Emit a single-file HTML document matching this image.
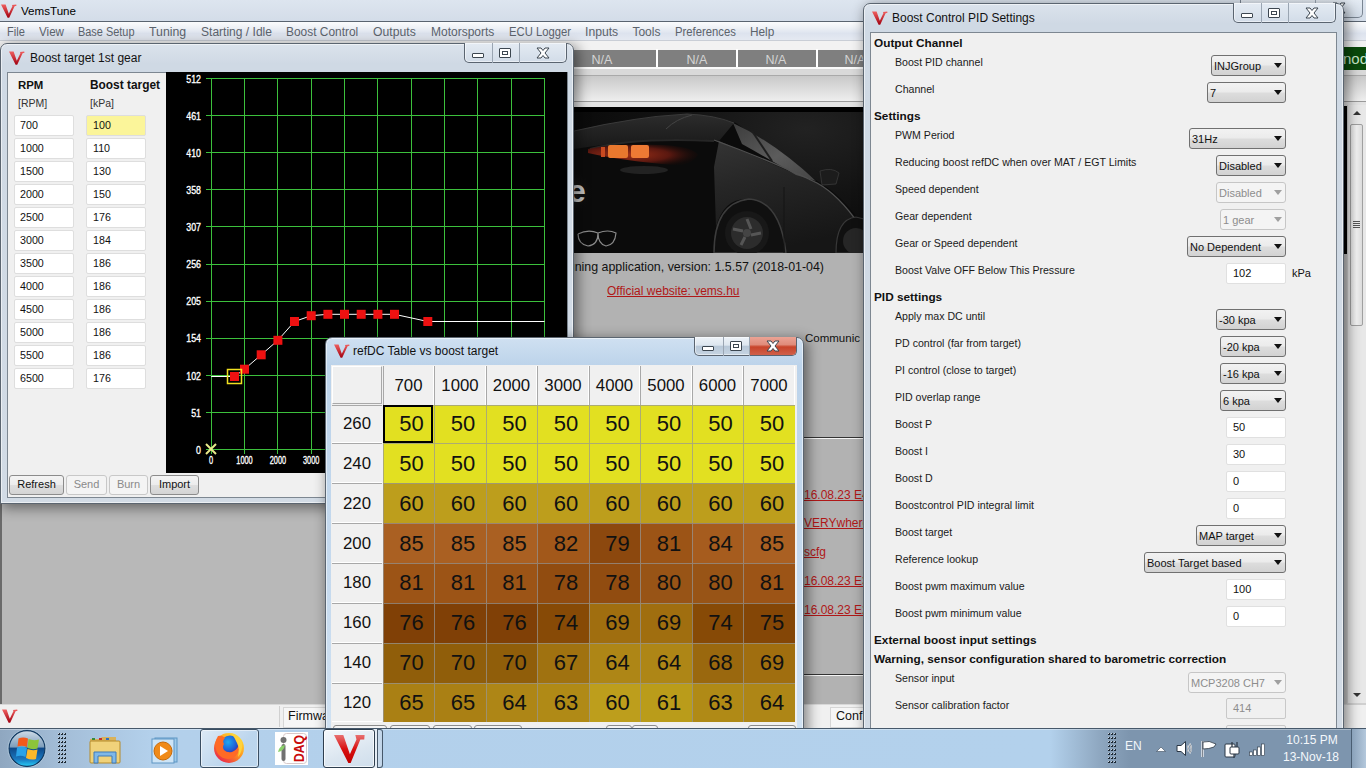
<!DOCTYPE html><html><head><meta charset="utf-8"><style>
*{box-sizing:border-box;margin:0;padding:0}
html,body{width:1366px;height:768px;overflow:hidden;position:relative;background:#ababab;font-family:"Liberation Sans",sans-serif;color:#000}
.a{position:absolute}
.t{position:absolute;white-space:nowrap;line-height:1}
</style></head><body>

<div class="a" style="left:0;top:0;width:1366px;height:22px;background:linear-gradient(#dde5ef,#d3dce8)"></div>
<div class="a" style="left:0;top:21px;width:1366px;height:1px;background:#5a6470"></div>
<div class="t" style="left:21px;top:5px;font-size:11.6px;color:#000">VemsTune</div>
<svg class="a" style="left:1px;top:4px" width="16" height="14" viewBox="0 0 16 14"><defs><linearGradient id="vg" x1="0" y1="0" x2="0" y2="1"><stop offset="0" stop-color="#f06060"/><stop offset="1" stop-color="#a00010"/></linearGradient></defs><path d="M0 0.5 L4.6 0.5 L7.8 9.8 L11.4 2.2 L11 1 L15.2 0.6 L15.5 1.8 L13.6 2.2 L8.2 13.8 L6.6 13.8 Z" fill="url(#vg)"/></svg>
<div class="a" style="left:1240px;top:0;width:123px;height:18px;border:1px solid #7a8592;border-top:none;border-radius:0 0 5px 5px;background:linear-gradient(#e4ebf3,#d2dce8)"></div>
<div class="a" style="left:1315px;top:0;width:1px;height:17px;background:#9aa5b2"></div>
<svg class="a" style="left:1331px;top:2px" width="16" height="12" viewBox="0 0 16 12"><path d="M2 1 L6 1 L8 3.5 L10 1 L14 1 L10 6 L14 11 L10 11 L8 8.5 L6 11 L2 11 L6 6 Z" fill="#fff" stroke="#3c4650" stroke-width="1"/></svg>
<div class="a" style="left:0;top:22px;width:1366px;height:19px;background:linear-gradient(#fbfcfd 0,#eef1f6 30%,#dde3ee 60%,#e6eaf2 100%)"></div>
<div class="a" style="left:0;top:40px;width:1366px;height:1px;background:#c9ced6"></div>
<div class="t" style="left:7.2px;top:26px;font-size:12px;color:#5c636c;transform:scaleX(0.922);transform-origin:0 0">File</div>
<div class="t" style="left:39.0px;top:26px;font-size:12px;color:#5c636c;transform:scaleX(0.969);transform-origin:0 0">View</div>
<div class="t" style="left:78.0px;top:26px;font-size:12px;color:#5c636c;transform:scaleX(0.910);transform-origin:0 0">Base Setup</div>
<div class="t" style="left:149.4px;top:26px;font-size:12px;color:#5c636c;transform:scaleX(1.025);transform-origin:0 0">Tuning</div>
<div class="t" style="left:201.0px;top:26px;font-size:12px;color:#5c636c;transform:scaleX(1.004);transform-origin:0 0">Starting / Idle</div>
<div class="t" style="left:286.4px;top:26px;font-size:12px;color:#5c636c;transform:scaleX(0.993);transform-origin:0 0">Boost Control</div>
<div class="t" style="left:373.2px;top:26px;font-size:12px;color:#5c636c;transform:scaleX(1.017);transform-origin:0 0">Outputs</div>
<div class="t" style="left:431.0px;top:26px;font-size:12px;color:#5c636c;transform:scaleX(1.000);transform-origin:0 0">Motorsports</div>
<div class="t" style="left:509.0px;top:26px;font-size:12px;color:#5c636c;transform:scaleX(0.938);transform-origin:0 0">ECU Logger</div>
<div class="t" style="left:584.6px;top:26px;font-size:12px;color:#5c636c;transform:scaleX(1.015);transform-origin:0 0">Inputs</div>
<div class="t" style="left:632.4px;top:26px;font-size:12px;color:#5c636c;transform:scaleX(1.000);transform-origin:0 0">Tools</div>
<div class="t" style="left:675.0px;top:26px;font-size:12px;color:#5c636c;transform:scaleX(0.941);transform-origin:0 0">Preferences</div>
<div class="t" style="left:750.0px;top:26px;font-size:12px;color:#5c636c;transform:scaleX(0.984);transform-origin:0 0">Help</div>
<div class="a" style="left:0;top:41px;width:1366px;height:9px;background:#f2f2f2"></div>
<div class="a" style="left:0;top:50px;width:1366px;height:17px;background:#7f7f7f"></div>
<div class="a" style="left:656px;top:49px;width:2px;height:19px;background:#fff"></div>
<div class="a" style="left:736px;top:49px;width:2px;height:19px;background:#fff"></div>
<div class="a" style="left:816px;top:49px;width:2px;height:19px;background:#fff"></div>
<div class="t" style="left:587px;top:54px;width:30px;text-align:center;font-size:12.5px;color:#d4d4d4">N/A</div>
<div class="t" style="left:682px;top:54px;width:30px;text-align:center;font-size:12.5px;color:#d4d4d4">N/A</div>
<div class="t" style="left:761px;top:54px;width:30px;text-align:center;font-size:12.5px;color:#d4d4d4">N/A</div>
<div class="t" style="left:840px;top:54px;width:30px;text-align:center;font-size:12.5px;color:#d4d4d4">N/A</div>
<div class="a" style="left:0;top:67px;width:1366px;height:2px;background:#fafafa"></div>
<div class="a" style="left:0;top:69px;width:1366px;height:7px;background:#d9d9d9"></div>
<div class="a" style="left:0;top:75px;width:1366px;height:1px;background:#a9a9a9"></div>
<div class="a" style="left:0;top:76px;width:1366px;height:26px;background:linear-gradient(#c9c9c9,#f0f0f0)"></div>
<div class="a" style="left:0;top:101px;width:1366px;height:1px;background:#9a9a9a"></div>
<div class="a" style="left:0;top:102px;width:1366px;height:5px;background:#e3e3e3"></div>
<div class="a" style="left:1336px;top:47px;width:30px;height:23px;background:#0b4a0b"></div>
<div class="t" style="left:1343px;top:51px;font-size:15px;color:#c8e6c8">nod</div>
<div class="a" style="left:0;top:107px;width:1366px;height:598px;background:#b2b2b2"></div>
<div class="a" style="left:0;top:490px;width:574px;height:215px;background:#b8b8b8;border-left:2px solid #6a6a6a"></div>
<div class="a" style="left:1342px;top:254px;width:5px;height:451px;background:#c8c8c8"></div>
<div class="a" style="left:1342px;top:106px;width:5px;height:148px;background:#000"></div>
<svg class="a" style="left:574px;top:107px" width="290" height="146" viewBox="0 0 290 146">
<defs>
<radialGradient id="cbg" cx="0.8" cy="0.15" r="0.9"><stop offset="0" stop-color="#222"/><stop offset="0.5" stop-color="#131313"/><stop offset="1" stop-color="#080808"/></radialGradient>
<linearGradient id="glass" x1="0" y1="0" x2="1" y2="1"><stop offset="0" stop-color="#3c3c3c"/><stop offset="0.55" stop-color="#5c5c5c"/><stop offset="1" stop-color="#444"/></linearGradient>
<linearGradient id="side" x1="0" y1="0" x2="0.3" y2="1"><stop offset="0" stop-color="#343434"/><stop offset="0.4" stop-color="#262626"/><stop offset="1" stop-color="#161616"/></linearGradient>
<linearGradient id="trunk" x1="0" y1="0" x2="0" y2="1"><stop offset="0" stop-color="#2c2c2c"/><stop offset="1" stop-color="#181818"/></linearGradient>
<radialGradient id="tl" cx="0.35" cy="0.5" r="0.65"><stop offset="0" stop-color="#a03018"/><stop offset="0.6" stop-color="#5a1810"/><stop offset="1" stop-color="#1a0a08" stop-opacity="0.3"/></radialGradient>
<radialGradient id="eglow" cx="0.1" cy="0.5" r="0.6"><stop offset="0" stop-color="#3a3a3a"/><stop offset="1" stop-color="#0c0c0c" stop-opacity="0"/></radialGradient>
</defs>
<rect width="290" height="146" fill="url(#cbg)"/>
<rect width="290" height="5" fill="#000"/>
<path d="M0 24 Q60 10 113 7 Q140 8 162 16 L246 76 Q270 90 288 118 L290 146 L0 146 Z" fill="#0b0b0b"/>
<path d="M0 24 Q60 10 113 7 Q140 8 160 16 L145 34 Q90 28 0 42 Z" fill="url(#trunk)"/>
<path d="M0 24 Q60 10 113 7 Q140 8 160 16" fill="none" stroke="#3a3a3a" stroke-width="1.2"/>
<path d="M92 22 Q102 12 118 8" fill="none" stroke="#444" stroke-width="1"/>
<path d="M145 34 L243 76 Q268 90 288 120 L290 146 L205 146 Q200 100 175 92 Q150 90 142 120 L140 60 Z" fill="url(#side)"/>
<path d="M159 16 Q200 35 242 74 L222 68 Q195 52 168 37 Z" fill="url(#glass)"/>
<path d="M178 24 L198 54" stroke="#1e1e1e" stroke-width="2"/>
<path d="M140 33 Q200 55 243 76 Q265 88 286 119" fill="none" stroke="#505050" stroke-width="1.3"/>
<path d="M16 42 Q60 30 140 34" fill="none" stroke="#262626" stroke-width="2"/>
<path d="M14 42 Q40 36 90 38 Q120 40 124 48 Q118 58 100 58 Q50 54 14 46 Z" fill="url(#tl)"/>
<rect x="27" y="40" width="4" height="10" fill="#c84a20"/><rect x="34" y="38" width="20" height="13" rx="2" fill="#e8782e"/><rect x="57" y="38" width="18" height="13" rx="2" fill="#ee7a34"/>
<ellipse cx="70" cy="63" rx="24" ry="4" fill="#222"/>
<ellipse cx="8" cy="85" rx="30" ry="22" fill="url(#eglow)"/>
<text x="-6" y="95" font-family="Liberation Sans" font-weight="700" font-size="32" fill="#c4c4c4">e</text>
<path d="M140 146 Q140 96 175 92 Q206 94 212 146 Z" fill="#101010" stroke="#3c3c3c" stroke-width="1.5"/>
<circle cx="173" cy="126" r="22" fill="#181818"/>
<circle cx="173" cy="126" r="16" fill="#2c2c2c"/>
<path d="M173 112 L177 122 M187 126 L177 128 M167 138 L171 130 M159 122 L169 124" stroke="#555" stroke-width="3"/>
<circle cx="173" cy="126" r="4" fill="#444"/>
<path d="M210 80 L210 146" stroke="#141414" stroke-width="1"/>
<path d="M246 64 Q258 60 265 66 L262 77 L248 78 Z" fill="#1c1c1c" stroke="#3a3a3a" stroke-width="0.8"/>
<path d="M262 146 Q262 112 282 110 L290 112 L290 146 Z" fill="#101010" stroke="#383838" stroke-width="1.2"/>
<circle cx="282" cy="134" r="13" fill="#262626"/>
<path d="M4 127 Q14 122 24 126 Q24 138 14 139 Q4 137 4 127 M24 126 Q34 122 42 126 Q41 138 32 139 Q24 137 24 126" fill="#0a0a0a" stroke="#8a8a8a" stroke-width="1.2"/>
</svg>
<div class="a" style="left:574px;top:255px;width:252px;height:20px;overflow:hidden"><div class="t" style="right:2px;top:6px;font-size:12.4px;color:#111">Official VEMS tuning application, version: 1.5.57 (2018-01-04)</div></div>
<div class="t" style="left:607px;top:285px;font-size:12px;color:#b01818;text-decoration:underline">Official website: vems.hu</div>
<div class="t" style="left:805px;top:333px;font-size:11.5px;color:#111">Communic</div>
<div class="a" style="left:573px;top:437px;width:291px;height:1px;background:#333"></div>
<div class="a" style="left:573px;top:438px;width:291px;height:1px;background:#f4f4f4"></div>
<div class="t" style="left:804px;top:489px;font-size:12px;color:#b01818;text-decoration:underline">16.08.23 E4</div>
<div class="t" style="left:804px;top:517px;font-size:12px;color:#b01818;text-decoration:underline">VERYwhere</div>
<div class="t" style="left:804px;top:546px;font-size:12px;color:#b01818;text-decoration:underline">scfg</div>
<div class="t" style="left:804px;top:575px;font-size:12px;color:#b01818;text-decoration:underline">16.08.23 E3</div>
<div class="t" style="left:804px;top:604px;font-size:12px;color:#b01818;text-decoration:underline">16.08.23 E2</div>
<div class="a" style="left:573px;top:674px;width:291px;height:1px;background:#333"></div>
<div class="a" style="left:573px;top:675px;width:291px;height:1px;background:#f4f4f4"></div>
<div class="a" style="left:0;top:704px;width:1366px;height:24px;background:#f0f0f0;border-top:1px solid #d8d8d8"></div>
<div class="a" style="left:50px;top:706px;width:230px;height:21px;border-right:1px solid #d0d0d0"></div>
<div class="a" style="left:283px;top:707px;width:60px;height:21px;border:1px solid #d6d6d6;background:#f6f6f6"></div>
<div class="t" style="left:288px;top:710px;font-size:12.5px;color:#111">Firmware</div>
<div class="a" style="left:830px;top:707px;width:40px;height:21px;border:1px solid #d6d6d6;background:#f6f6f6"></div>
<div class="t" style="left:836px;top:710px;font-size:12.5px;color:#111">Conf</div>
<svg class="a" style="left:2px;top:709px" width="16" height="14" viewBox="0 0 16 14"><defs><linearGradient id="vg" x1="0" y1="0" x2="0" y2="1"><stop offset="0" stop-color="#f06060"/><stop offset="1" stop-color="#a00010"/></linearGradient></defs><path d="M0 0.5 L4.6 0.5 L7.8 9.8 L11.4 2.2 L11 1 L15.2 0.6 L15.5 1.8 L13.6 2.2 L8.2 13.8 L6.6 13.8 Z" fill="url(#vg)"/></svg>
<div class="a" style="left:1347px;top:105px;width:19px;height:600px;background:#e8e8e8;border-left:1px solid #d0d0d0"></div>
<div class="a" style="left:1350px;top:124px;width:13px;height:202px;background:linear-gradient(90deg,#e4e4e4,#f4f4f4 50%,#dcdcdc);border:1px solid #a0a0a0;border-radius:2px"></div>
<svg class="a" style="left:1353px;top:111px" width="8" height="4"><path d="M0 4 L8 4 L4 0 Z" fill="#333"/></svg>
<div class="a" style="left:1353px;top:221px;width:7px;height:7px;background:repeating-linear-gradient(#555 0,#555 1px,transparent 1px,transparent 2px)"></div>
<svg class="a" style="left:1353px;top:693px" width="8" height="4"><path d="M0 0 L8 0 L4 4 Z" fill="#333"/></svg>
<div class="a" style="left:1347px;top:703px;width:19px;height:2px;background:#d0d0d0"></div>
<div class="a" style="left:0px;top:43px;width:574px;height:461px;background:linear-gradient(180deg,#dbe3ec 0,#cfd9e4 20px,#d2dbe5 100%);border:1px solid #5b6570;border-radius:7px 7px 0 0;box-shadow:inset 0 0 0 1px rgba(255,255,255,.55),3px 3px 13px 1px rgba(0,0,0,.45)"></div><div class="a" style="left:7px;top:72px;width:561px;height:426px;background:#f0f0f0;border:1px solid #7d8791"></div><svg class="a" style="left:9px;top:51px" width="16" height="14" viewBox="0 0 16 14"><defs><linearGradient id="vg" x1="0" y1="0" x2="0" y2="1"><stop offset="0" stop-color="#f06060"/><stop offset="1" stop-color="#a00010"/></linearGradient></defs><path d="M0 0.5 L4.6 0.5 L7.8 9.8 L11.4 2.2 L11 1 L15.2 0.6 L15.5 1.8 L13.6 2.2 L8.2 13.8 L6.6 13.8 Z" fill="url(#vg)"/></svg><div class="t" style="left:30px;top:52px;font-size:12px;color:#111">Boost target 1st gear</div><div class="a" style="left:464px;top:43px;width:103px;height:20px;border:1px solid #5a6470;border-top:none;border-radius:0 0 5px 5px;background:linear-gradient(#e4ebf3,#d2dce8);box-shadow:inset 0 0 0 1px rgba(255,255,255,.5)"></div><div class="a" style="left:492px;top:43px;width:1px;height:20px;background:#9aa5b2"></div><div class="a" style="left:519px;top:43px;width:1px;height:20px;background:#9aa5b2"></div><div class="a" style="left:472px;top:53px;width:12px;height:5px;background:#fff;border:1px solid #3c4650;border-radius:1px"></div><div class="a" style="left:499px;top:48px;width:12px;height:10px;background:#fff;border:1px solid #3c4650;border-radius:1px"></div><div class="a" style="left:502px;top:51px;width:6px;height:4px;border:1px solid #3c4650"></div><svg class="a" style="left:535px;top:47px" width="16" height="12" viewBox="0 0 16 12"><path d="M2 1 L6 1 L8 3.5 L10 1 L14 1 L10 6 L14 11 L10 11 L8 8.5 L6 11 L2 11 L6 6 Z" fill="#fff" stroke="#3c4650" stroke-width="1"/></svg>
<div class="t" style="left:18px;top:80px;font-size:11.4px;font-weight:700;color:#111">RPM</div>
<div class="t" style="left:90px;top:80px;font-size:11.9px;font-weight:700;color:#111">Boost target</div>
<div class="t" style="left:18px;top:98px;font-size:10.5px;color:#333">[RPM]</div>
<div class="t" style="left:90px;top:98px;font-size:10.5px;color:#333">[kPa]</div>
<div class="a" style="left:14px;top:115px;width:60px;height:21px;background:#fff;border:1px solid #dedede;border-radius:2px"></div>
<div class="t" style="left:20px;top:120px;font-size:10.7px;color:#111">700</div>
<div class="a" style="left:86px;top:115px;width:60px;height:21px;background:#fbf59a;border:1px solid #dedede;border-radius:2px"></div>
<div class="t" style="left:93px;top:120px;font-size:10.7px;color:#111">100</div>
<div class="a" style="left:14px;top:138px;width:60px;height:21px;background:#fff;border:1px solid #dedede;border-radius:2px"></div>
<div class="t" style="left:20px;top:143px;font-size:10.7px;color:#111">1000</div>
<div class="a" style="left:86px;top:138px;width:60px;height:21px;background:#fff;border:1px solid #dedede;border-radius:2px"></div>
<div class="t" style="left:93px;top:143px;font-size:10.7px;color:#111">110</div>
<div class="a" style="left:14px;top:161px;width:60px;height:21px;background:#fff;border:1px solid #dedede;border-radius:2px"></div>
<div class="t" style="left:20px;top:166px;font-size:10.7px;color:#111">1500</div>
<div class="a" style="left:86px;top:161px;width:60px;height:21px;background:#fff;border:1px solid #dedede;border-radius:2px"></div>
<div class="t" style="left:93px;top:166px;font-size:10.7px;color:#111">130</div>
<div class="a" style="left:14px;top:184px;width:60px;height:21px;background:#fff;border:1px solid #dedede;border-radius:2px"></div>
<div class="t" style="left:20px;top:189px;font-size:10.7px;color:#111">2000</div>
<div class="a" style="left:86px;top:184px;width:60px;height:21px;background:#fff;border:1px solid #dedede;border-radius:2px"></div>
<div class="t" style="left:93px;top:189px;font-size:10.7px;color:#111">150</div>
<div class="a" style="left:14px;top:207px;width:60px;height:21px;background:#fff;border:1px solid #dedede;border-radius:2px"></div>
<div class="t" style="left:20px;top:212px;font-size:10.7px;color:#111">2500</div>
<div class="a" style="left:86px;top:207px;width:60px;height:21px;background:#fff;border:1px solid #dedede;border-radius:2px"></div>
<div class="t" style="left:93px;top:212px;font-size:10.7px;color:#111">176</div>
<div class="a" style="left:14px;top:230px;width:60px;height:21px;background:#fff;border:1px solid #dedede;border-radius:2px"></div>
<div class="t" style="left:20px;top:235px;font-size:10.7px;color:#111">3000</div>
<div class="a" style="left:86px;top:230px;width:60px;height:21px;background:#fff;border:1px solid #dedede;border-radius:2px"></div>
<div class="t" style="left:93px;top:235px;font-size:10.7px;color:#111">184</div>
<div class="a" style="left:14px;top:253px;width:60px;height:21px;background:#fff;border:1px solid #dedede;border-radius:2px"></div>
<div class="t" style="left:20px;top:258px;font-size:10.7px;color:#111">3500</div>
<div class="a" style="left:86px;top:253px;width:60px;height:21px;background:#fff;border:1px solid #dedede;border-radius:2px"></div>
<div class="t" style="left:93px;top:258px;font-size:10.7px;color:#111">186</div>
<div class="a" style="left:14px;top:276px;width:60px;height:21px;background:#fff;border:1px solid #dedede;border-radius:2px"></div>
<div class="t" style="left:20px;top:281px;font-size:10.7px;color:#111">4000</div>
<div class="a" style="left:86px;top:276px;width:60px;height:21px;background:#fff;border:1px solid #dedede;border-radius:2px"></div>
<div class="t" style="left:93px;top:281px;font-size:10.7px;color:#111">186</div>
<div class="a" style="left:14px;top:299px;width:60px;height:21px;background:#fff;border:1px solid #dedede;border-radius:2px"></div>
<div class="t" style="left:20px;top:304px;font-size:10.7px;color:#111">4500</div>
<div class="a" style="left:86px;top:299px;width:60px;height:21px;background:#fff;border:1px solid #dedede;border-radius:2px"></div>
<div class="t" style="left:93px;top:304px;font-size:10.7px;color:#111">186</div>
<div class="a" style="left:14px;top:322px;width:60px;height:21px;background:#fff;border:1px solid #dedede;border-radius:2px"></div>
<div class="t" style="left:20px;top:327px;font-size:10.7px;color:#111">5000</div>
<div class="a" style="left:86px;top:322px;width:60px;height:21px;background:#fff;border:1px solid #dedede;border-radius:2px"></div>
<div class="t" style="left:93px;top:327px;font-size:10.7px;color:#111">186</div>
<div class="a" style="left:14px;top:345px;width:60px;height:21px;background:#fff;border:1px solid #dedede;border-radius:2px"></div>
<div class="t" style="left:20px;top:350px;font-size:10.7px;color:#111">5500</div>
<div class="a" style="left:86px;top:345px;width:60px;height:21px;background:#fff;border:1px solid #dedede;border-radius:2px"></div>
<div class="t" style="left:93px;top:350px;font-size:10.7px;color:#111">186</div>
<div class="a" style="left:14px;top:368px;width:60px;height:21px;background:#fff;border:1px solid #dedede;border-radius:2px"></div>
<div class="t" style="left:20px;top:373px;font-size:10.7px;color:#111">6500</div>
<div class="a" style="left:86px;top:368px;width:60px;height:21px;background:#fff;border:1px solid #dedede;border-radius:2px"></div>
<div class="t" style="left:93px;top:373px;font-size:10.7px;color:#111">176</div>
<div class="a" style="left:9px;top:475px;width:55px;height:20px;border:1px solid #8c8c8c;border-radius:3px;background:linear-gradient(#f4f4f4 0,#ececec 50%,#dedede 51%,#d4d4d4 100%)"></div>
<div class="t" style="left:9px;top:479px;width:55px;text-align:center;font-size:11px;color:#111">Refresh</div>
<div class="a" style="left:66px;top:475px;width:41px;height:20px;border:1px solid #c8c8c8;border-radius:3px;background:#f4f4f4"></div>
<div class="t" style="left:66px;top:479px;width:41px;text-align:center;font-size:11px;color:#8a8a8a">Send</div>
<div class="a" style="left:109px;top:475px;width:39px;height:20px;border:1px solid #c8c8c8;border-radius:3px;background:#f4f4f4"></div>
<div class="t" style="left:109px;top:479px;width:39px;text-align:center;font-size:11px;color:#8a8a8a">Burn</div>
<div class="a" style="left:150px;top:475px;width:49px;height:20px;border:1px solid #8c8c8c;border-radius:3px;background:linear-gradient(#f4f4f4 0,#ececec 50%,#dedede 51%,#d4d4d4 100%)"></div>
<div class="t" style="left:150px;top:479px;width:49px;text-align:center;font-size:11px;color:#111">Import</div>
<div class="a" style="left:166px;top:72px;width:401px;height:401px;background:#000"></div>
<svg class="a" style="left:166px;top:72px" width="401" height="401" viewBox="166 72 401 401"><line x1="211.5" y1="78" x2="211.5" y2="454" stroke="#3cc03c" stroke-width="1"/><line x1="244.5" y1="78" x2="244.5" y2="454" stroke="#3cc03c" stroke-width="1"/><line x1="277.5" y1="78" x2="277.5" y2="454" stroke="#3cc03c" stroke-width="1"/><line x1="311.5" y1="78" x2="311.5" y2="454" stroke="#3cc03c" stroke-width="1"/><line x1="344.5" y1="78" x2="344.5" y2="454" stroke="#3cc03c" stroke-width="1"/><line x1="377.5" y1="78" x2="377.5" y2="454" stroke="#3cc03c" stroke-width="1"/><line x1="411.5" y1="78" x2="411.5" y2="454" stroke="#3cc03c" stroke-width="1"/><line x1="444.5" y1="78" x2="444.5" y2="454" stroke="#3cc03c" stroke-width="1"/><line x1="477.5" y1="78" x2="477.5" y2="454" stroke="#3cc03c" stroke-width="1"/><line x1="511.5" y1="78" x2="511.5" y2="454" stroke="#3cc03c" stroke-width="1"/><line x1="544.5" y1="78" x2="544.5" y2="454" stroke="#3cc03c" stroke-width="1"/><line x1="206" y1="78.5" x2="545" y2="78.5" stroke="#3cc03c" stroke-width="1"/><text x="186.3" y="82.7" textLength="14.7" lengthAdjust="spacingAndGlyphs" font-family="Liberation Sans" font-size="11.5" font-weight="400" fill="#fff" stroke="#fff" stroke-width="0.35">512</text><line x1="206" y1="115.5" x2="545" y2="115.5" stroke="#3cc03c" stroke-width="1"/><text x="186.3" y="119.8" textLength="14.7" lengthAdjust="spacingAndGlyphs" font-family="Liberation Sans" font-size="11.5" font-weight="400" fill="#fff" stroke="#fff" stroke-width="0.35">461</text><line x1="206" y1="152.5" x2="545" y2="152.5" stroke="#3cc03c" stroke-width="1"/><text x="186.3" y="156.9" textLength="14.7" lengthAdjust="spacingAndGlyphs" font-family="Liberation Sans" font-size="11.5" font-weight="400" fill="#fff" stroke="#fff" stroke-width="0.35">410</text><line x1="206" y1="189.5" x2="545" y2="189.5" stroke="#3cc03c" stroke-width="1"/><text x="186.3" y="194.0" textLength="14.7" lengthAdjust="spacingAndGlyphs" font-family="Liberation Sans" font-size="11.5" font-weight="400" fill="#fff" stroke="#fff" stroke-width="0.35">358</text><line x1="206" y1="226.5" x2="545" y2="226.5" stroke="#3cc03c" stroke-width="1"/><text x="186.3" y="231.1" textLength="14.7" lengthAdjust="spacingAndGlyphs" font-family="Liberation Sans" font-size="11.5" font-weight="400" fill="#fff" stroke="#fff" stroke-width="0.35">307</text><line x1="206" y1="264.5" x2="545" y2="264.5" stroke="#3cc03c" stroke-width="1"/><text x="186.3" y="268.2" textLength="14.7" lengthAdjust="spacingAndGlyphs" font-family="Liberation Sans" font-size="11.5" font-weight="400" fill="#fff" stroke="#fff" stroke-width="0.35">256</text><line x1="206" y1="301.5" x2="545" y2="301.5" stroke="#3cc03c" stroke-width="1"/><text x="186.3" y="305.3" textLength="14.7" lengthAdjust="spacingAndGlyphs" font-family="Liberation Sans" font-size="11.5" font-weight="400" fill="#fff" stroke="#fff" stroke-width="0.35">205</text><line x1="206" y1="338.5" x2="545" y2="338.5" stroke="#3cc03c" stroke-width="1"/><text x="186.3" y="342.4" textLength="14.7" lengthAdjust="spacingAndGlyphs" font-family="Liberation Sans" font-size="11.5" font-weight="400" fill="#fff" stroke="#fff" stroke-width="0.35">154</text><line x1="206" y1="375.5" x2="545" y2="375.5" stroke="#3cc03c" stroke-width="1"/><text x="186.3" y="379.5" textLength="14.7" lengthAdjust="spacingAndGlyphs" font-family="Liberation Sans" font-size="11.5" font-weight="400" fill="#fff" stroke="#fff" stroke-width="0.35">102</text><line x1="206" y1="412.5" x2="545" y2="412.5" stroke="#3cc03c" stroke-width="1"/><text x="191.2" y="416.6" textLength="9.8" lengthAdjust="spacingAndGlyphs" font-family="Liberation Sans" font-size="11.5" font-weight="400" fill="#fff" stroke="#fff" stroke-width="0.35">51</text><line x1="206" y1="449.5" x2="545" y2="449.5" stroke="#3cc03c" stroke-width="1"/><text x="196.1" y="453.7" textLength="4.9" lengthAdjust="spacingAndGlyphs" font-family="Liberation Sans" font-size="11.5" font-weight="400" fill="#fff" stroke="#fff" stroke-width="0.35">0</text><text x="209.1" y="464" textLength="4.1" lengthAdjust="spacingAndGlyphs" font-family="Liberation Sans" font-size="11" font-weight="400" fill="#fff" stroke="#fff" stroke-width="0.35">0</text><text x="236.3" y="464" textLength="16.4" lengthAdjust="spacingAndGlyphs" font-family="Liberation Sans" font-size="11" font-weight="400" fill="#fff" stroke="#fff" stroke-width="0.35">1000</text><text x="269.7" y="464" textLength="16.4" lengthAdjust="spacingAndGlyphs" font-family="Liberation Sans" font-size="11" font-weight="400" fill="#fff" stroke="#fff" stroke-width="0.35">2000</text><text x="303.0" y="464" textLength="16.4" lengthAdjust="spacingAndGlyphs" font-family="Liberation Sans" font-size="11" font-weight="400" fill="#fff" stroke="#fff" stroke-width="0.35">3000</text><polyline points="211.2,376.5 234.5,376.5 244.5,369.2 261.2,354.8 277.9,340.3 294.5,321.5 311.2,315.7 327.9,314.3 344.5,314.3 361.2,314.3 377.9,314.3 394.5,314.3 427.8,321.5 544.5,321.5" fill="none" stroke="#fff" stroke-width="1"/><rect x="230.0" y="372.0" width="9" height="9" fill="#ee1111"/><rect x="240.0" y="364.7" width="9" height="9" fill="#ee1111"/><rect x="256.7" y="350.3" width="9" height="9" fill="#ee1111"/><rect x="273.4" y="335.8" width="9" height="9" fill="#ee1111"/><rect x="290.0" y="317.0" width="9" height="9" fill="#ee1111"/><rect x="306.7" y="311.2" width="9" height="9" fill="#ee1111"/><rect x="323.4" y="309.8" width="9" height="9" fill="#ee1111"/><rect x="340.0" y="309.8" width="9" height="9" fill="#ee1111"/><rect x="356.7" y="309.8" width="9" height="9" fill="#ee1111"/><rect x="373.4" y="309.8" width="9" height="9" fill="#ee1111"/><rect x="390.0" y="309.8" width="9" height="9" fill="#ee1111"/><rect x="423.3" y="317.0" width="9" height="9" fill="#ee1111"/><rect x="227.5" y="369.5" width="14" height="14" fill="none" stroke="#f0e020" stroke-width="1.5"/><path d="M206 444 L216 454 M216 444 L206 454" stroke="#e8e88a" stroke-width="2"/></svg>
<div class="a" style="left:325px;top:337px;width:479px;height:420px;background:linear-gradient(180deg,#cfe0f1 0,#bcd3ea 28px,#c6daee 60%,#d2e3f3 100%);border:1px solid #5b6570;border-radius:7px 7px 0 0;box-shadow:inset 0 0 0 1px rgba(255,255,255,.55),3px 3px 13px 1px rgba(0,0,0,.45)"></div><div class="a" style="left:331px;top:365px;width:466px;height:393px;background:#f0f0f0;border:1px solid #7d8791"></div><svg class="a" style="left:334px;top:344px" width="16" height="14" viewBox="0 0 16 14"><defs><linearGradient id="vg" x1="0" y1="0" x2="0" y2="1"><stop offset="0" stop-color="#f06060"/><stop offset="1" stop-color="#a00010"/></linearGradient></defs><path d="M0 0.5 L4.6 0.5 L7.8 9.8 L11.4 2.2 L11 1 L15.2 0.6 L15.5 1.8 L13.6 2.2 L8.2 13.8 L6.6 13.8 Z" fill="url(#vg)"/></svg><div class="t" style="left:353px;top:345px;font-size:12px;color:#111">refDC Table vs boost target</div><div class="a" style="left:694px;top:337px;width:103px;height:19px;border:1px solid #5a6470;border-top:none;border-radius:0 0 5px 5px;background:linear-gradient(#eef3f8 0,#dde6ef 45%,#b8c8d8 52%,#c6d4e2 100%);box-shadow:inset 0 0 0 1px rgba(255,255,255,.5)"></div><div class="a" style="left:723px;top:337px;width:1px;height:19px;background:#9aa5b2"></div><div class="a" style="left:749px;top:337px;width:1px;height:19px;background:#9aa5b2"></div><div class="a" style="left:750px;top:337px;width:46px;height:18px;border-radius:0 0 4px 0;background:linear-gradient(#eba395 0,#e08c7a 42%,#c8442a 55%,#d0604a 100%)"></div><div class="a" style="left:702px;top:346px;width:12px;height:5px;background:#fff;border:1px solid #3c4650;border-radius:1px"></div><div class="a" style="left:730px;top:341px;width:12px;height:10px;background:#fff;border:1px solid #3c4650;border-radius:1px"></div><div class="a" style="left:733px;top:344px;width:6px;height:4px;border:1px solid #3c4650"></div><svg class="a" style="left:765px;top:340px" width="16" height="12" viewBox="0 0 16 12"><path d="M2 1 L6 1 L8 3.5 L10 1 L14 1 L10 6 L14 11 L10 11 L8 8.5 L6 11 L2 11 L6 6 Z" fill="#fff" stroke="#3c4650" stroke-width="1"/></svg>
<div class="a" style="left:331px;top:365px;width:466px;height:363px;background:#f0f0f0"></div>
<div class="a" style="left:332px;top:366px;width:50px;height:38px;background:#f0f0f0;border:1px solid #fff;border-right-color:#a8a8a8;border-bottom-color:#a8a8a8"></div>
<div class="a" style="left:383px;top:366px;width:51px;height:39px;background:#f0f0f0;border-left:1px solid #a8a8a8;border-right:1px solid #fff"></div>
<div class="t" style="left:383px;top:378px;width:51px;text-align:center;font-size:16.8px;color:#111">700</div>
<div class="a" style="left:434px;top:366px;width:52px;height:39px;background:#f0f0f0;border-left:1px solid #a8a8a8;border-right:1px solid #fff"></div>
<div class="t" style="left:434px;top:378px;width:52px;text-align:center;font-size:16.8px;color:#111">1000</div>
<div class="a" style="left:486px;top:366px;width:51px;height:39px;background:#f0f0f0;border-left:1px solid #a8a8a8;border-right:1px solid #fff"></div>
<div class="t" style="left:486px;top:378px;width:51px;text-align:center;font-size:16.8px;color:#111">2000</div>
<div class="a" style="left:537px;top:366px;width:52px;height:39px;background:#f0f0f0;border-left:1px solid #a8a8a8;border-right:1px solid #fff"></div>
<div class="t" style="left:537px;top:378px;width:52px;text-align:center;font-size:16.8px;color:#111">3000</div>
<div class="a" style="left:589px;top:366px;width:51px;height:39px;background:#f0f0f0;border-left:1px solid #a8a8a8;border-right:1px solid #fff"></div>
<div class="t" style="left:589px;top:378px;width:51px;text-align:center;font-size:16.8px;color:#111">4000</div>
<div class="a" style="left:640px;top:366px;width:52px;height:39px;background:#f0f0f0;border-left:1px solid #a8a8a8;border-right:1px solid #fff"></div>
<div class="t" style="left:640px;top:378px;width:52px;text-align:center;font-size:16.8px;color:#111">5000</div>
<div class="a" style="left:692px;top:366px;width:51px;height:39px;background:#f0f0f0;border-left:1px solid #a8a8a8;border-right:1px solid #fff"></div>
<div class="t" style="left:692px;top:378px;width:51px;text-align:center;font-size:16.8px;color:#111">6000</div>
<div class="a" style="left:743px;top:366px;width:52px;height:39px;background:#f0f0f0;border-left:1px solid #a8a8a8;border-right:1px solid #fff"></div>
<div class="t" style="left:743px;top:378px;width:52px;text-align:center;font-size:16.8px;color:#111">7000</div>
<div class="a" style="left:332px;top:405px;width:50px;height:38px;background:#f0f0f0;border-top:1px solid #a8a8a8;border-bottom:1px solid #fff"></div>
<div class="t" style="left:332px;top:416px;width:50px;text-align:center;font-size:16.8px;color:#111">260</div>
<div class="a" style="left:383px;top:405px;width:51px;height:38px;background:rgb(226,224,33);border-left:1px solid rgba(150,150,150,.7);border-top:1px solid rgba(150,150,150,.7)"></div>
<div class="t" style="left:386px;top:413px;width:51px;text-align:center;font-size:22px;color:#111">50</div>
<div class="a" style="left:434px;top:405px;width:52px;height:38px;background:rgb(226,224,33);border-left:1px solid rgba(150,150,150,.7);border-top:1px solid rgba(150,150,150,.7)"></div>
<div class="t" style="left:437px;top:413px;width:52px;text-align:center;font-size:22px;color:#111">50</div>
<div class="a" style="left:486px;top:405px;width:51px;height:38px;background:rgb(226,224,33);border-left:1px solid rgba(150,150,150,.7);border-top:1px solid rgba(150,150,150,.7)"></div>
<div class="t" style="left:489px;top:413px;width:51px;text-align:center;font-size:22px;color:#111">50</div>
<div class="a" style="left:537px;top:405px;width:52px;height:38px;background:rgb(226,224,33);border-left:1px solid rgba(150,150,150,.7);border-top:1px solid rgba(150,150,150,.7)"></div>
<div class="t" style="left:540px;top:413px;width:52px;text-align:center;font-size:22px;color:#111">50</div>
<div class="a" style="left:589px;top:405px;width:51px;height:38px;background:rgb(226,224,33);border-left:1px solid rgba(150,150,150,.7);border-top:1px solid rgba(150,150,150,.7)"></div>
<div class="t" style="left:592px;top:413px;width:51px;text-align:center;font-size:22px;color:#111">50</div>
<div class="a" style="left:640px;top:405px;width:52px;height:38px;background:rgb(226,224,33);border-left:1px solid rgba(150,150,150,.7);border-top:1px solid rgba(150,150,150,.7)"></div>
<div class="t" style="left:643px;top:413px;width:52px;text-align:center;font-size:22px;color:#111">50</div>
<div class="a" style="left:692px;top:405px;width:51px;height:38px;background:rgb(226,224,33);border-left:1px solid rgba(150,150,150,.7);border-top:1px solid rgba(150,150,150,.7)"></div>
<div class="t" style="left:695px;top:413px;width:51px;text-align:center;font-size:22px;color:#111">50</div>
<div class="a" style="left:743px;top:405px;width:52px;height:38px;background:rgb(226,224,33);border-left:1px solid rgba(150,150,150,.7);border-top:1px solid rgba(150,150,150,.7)"></div>
<div class="t" style="left:746px;top:413px;width:52px;text-align:center;font-size:22px;color:#111">50</div>
<div class="a" style="left:332px;top:443px;width:50px;height:40px;background:#f0f0f0;border-top:1px solid #a8a8a8;border-bottom:1px solid #fff"></div>
<div class="t" style="left:332px;top:456px;width:50px;text-align:center;font-size:16.8px;color:#111">240</div>
<div class="a" style="left:383px;top:443px;width:51px;height:40px;background:rgb(226,224,33);border-left:1px solid rgba(150,150,150,.7);border-top:1px solid rgba(150,150,150,.7)"></div>
<div class="t" style="left:386px;top:453px;width:51px;text-align:center;font-size:22px;color:#111">50</div>
<div class="a" style="left:434px;top:443px;width:52px;height:40px;background:rgb(226,224,33);border-left:1px solid rgba(150,150,150,.7);border-top:1px solid rgba(150,150,150,.7)"></div>
<div class="t" style="left:437px;top:453px;width:52px;text-align:center;font-size:22px;color:#111">50</div>
<div class="a" style="left:486px;top:443px;width:51px;height:40px;background:rgb(226,224,33);border-left:1px solid rgba(150,150,150,.7);border-top:1px solid rgba(150,150,150,.7)"></div>
<div class="t" style="left:489px;top:453px;width:51px;text-align:center;font-size:22px;color:#111">50</div>
<div class="a" style="left:537px;top:443px;width:52px;height:40px;background:rgb(226,224,33);border-left:1px solid rgba(150,150,150,.7);border-top:1px solid rgba(150,150,150,.7)"></div>
<div class="t" style="left:540px;top:453px;width:52px;text-align:center;font-size:22px;color:#111">50</div>
<div class="a" style="left:589px;top:443px;width:51px;height:40px;background:rgb(226,224,33);border-left:1px solid rgba(150,150,150,.7);border-top:1px solid rgba(150,150,150,.7)"></div>
<div class="t" style="left:592px;top:453px;width:51px;text-align:center;font-size:22px;color:#111">50</div>
<div class="a" style="left:640px;top:443px;width:52px;height:40px;background:rgb(226,224,33);border-left:1px solid rgba(150,150,150,.7);border-top:1px solid rgba(150,150,150,.7)"></div>
<div class="t" style="left:643px;top:453px;width:52px;text-align:center;font-size:22px;color:#111">50</div>
<div class="a" style="left:692px;top:443px;width:51px;height:40px;background:rgb(226,224,33);border-left:1px solid rgba(150,150,150,.7);border-top:1px solid rgba(150,150,150,.7)"></div>
<div class="t" style="left:695px;top:453px;width:51px;text-align:center;font-size:22px;color:#111">50</div>
<div class="a" style="left:743px;top:443px;width:52px;height:40px;background:rgb(226,224,33);border-left:1px solid rgba(150,150,150,.7);border-top:1px solid rgba(150,150,150,.7)"></div>
<div class="t" style="left:746px;top:453px;width:52px;text-align:center;font-size:22px;color:#111">50</div>
<div class="a" style="left:332px;top:483px;width:50px;height:40px;background:#f0f0f0;border-top:1px solid #a8a8a8;border-bottom:1px solid #fff"></div>
<div class="t" style="left:332px;top:496px;width:50px;text-align:center;font-size:16.8px;color:#111">220</div>
<div class="a" style="left:383px;top:483px;width:51px;height:40px;background:rgb(189,158,28);border-left:1px solid rgba(150,150,150,.7);border-top:1px solid rgba(150,150,150,.7)"></div>
<div class="t" style="left:386px;top:493px;width:51px;text-align:center;font-size:22px;color:#111">60</div>
<div class="a" style="left:434px;top:483px;width:52px;height:40px;background:rgb(189,158,28);border-left:1px solid rgba(150,150,150,.7);border-top:1px solid rgba(150,150,150,.7)"></div>
<div class="t" style="left:437px;top:493px;width:52px;text-align:center;font-size:22px;color:#111">60</div>
<div class="a" style="left:486px;top:483px;width:51px;height:40px;background:rgb(189,158,28);border-left:1px solid rgba(150,150,150,.7);border-top:1px solid rgba(150,150,150,.7)"></div>
<div class="t" style="left:489px;top:493px;width:51px;text-align:center;font-size:22px;color:#111">60</div>
<div class="a" style="left:537px;top:483px;width:52px;height:40px;background:rgb(189,158,28);border-left:1px solid rgba(150,150,150,.7);border-top:1px solid rgba(150,150,150,.7)"></div>
<div class="t" style="left:540px;top:493px;width:52px;text-align:center;font-size:22px;color:#111">60</div>
<div class="a" style="left:589px;top:483px;width:51px;height:40px;background:rgb(189,158,28);border-left:1px solid rgba(150,150,150,.7);border-top:1px solid rgba(150,150,150,.7)"></div>
<div class="t" style="left:592px;top:493px;width:51px;text-align:center;font-size:22px;color:#111">60</div>
<div class="a" style="left:640px;top:483px;width:52px;height:40px;background:rgb(189,158,28);border-left:1px solid rgba(150,150,150,.7);border-top:1px solid rgba(150,150,150,.7)"></div>
<div class="t" style="left:643px;top:493px;width:52px;text-align:center;font-size:22px;color:#111">60</div>
<div class="a" style="left:692px;top:483px;width:51px;height:40px;background:rgb(189,158,28);border-left:1px solid rgba(150,150,150,.7);border-top:1px solid rgba(150,150,150,.7)"></div>
<div class="t" style="left:695px;top:493px;width:51px;text-align:center;font-size:22px;color:#111">60</div>
<div class="a" style="left:743px;top:483px;width:52px;height:40px;background:rgb(189,158,28);border-left:1px solid rgba(150,150,150,.7);border-top:1px solid rgba(150,150,150,.7)"></div>
<div class="t" style="left:746px;top:493px;width:52px;text-align:center;font-size:22px;color:#111">60</div>
<div class="a" style="left:332px;top:523px;width:50px;height:40px;background:#f0f0f0;border-top:1px solid #a8a8a8;border-bottom:1px solid #fff"></div>
<div class="t" style="left:332px;top:536px;width:50px;text-align:center;font-size:16.8px;color:#111">200</div>
<div class="a" style="left:383px;top:523px;width:51px;height:40px;background:rgb(170,96,34);border-left:1px solid rgba(150,150,150,.7);border-top:1px solid rgba(150,150,150,.7)"></div>
<div class="t" style="left:386px;top:533px;width:51px;text-align:center;font-size:22px;color:#111">85</div>
<div class="a" style="left:434px;top:523px;width:52px;height:40px;background:rgb(170,96,34);border-left:1px solid rgba(150,150,150,.7);border-top:1px solid rgba(150,150,150,.7)"></div>
<div class="t" style="left:437px;top:533px;width:52px;text-align:center;font-size:22px;color:#111">85</div>
<div class="a" style="left:486px;top:523px;width:51px;height:40px;background:rgb(170,96,34);border-left:1px solid rgba(150,150,150,.7);border-top:1px solid rgba(150,150,150,.7)"></div>
<div class="t" style="left:489px;top:533px;width:51px;text-align:center;font-size:22px;color:#111">85</div>
<div class="a" style="left:537px;top:523px;width:52px;height:40px;background:rgb(162,88,26);border-left:1px solid rgba(150,150,150,.7);border-top:1px solid rgba(150,150,150,.7)"></div>
<div class="t" style="left:540px;top:533px;width:52px;text-align:center;font-size:22px;color:#111">82</div>
<div class="a" style="left:589px;top:523px;width:51px;height:40px;background:rgb(140,72,14);border-left:1px solid rgba(150,150,150,.7);border-top:1px solid rgba(150,150,150,.7)"></div>
<div class="t" style="left:592px;top:533px;width:51px;text-align:center;font-size:22px;color:#111">79</div>
<div class="a" style="left:640px;top:523px;width:52px;height:40px;background:rgb(156,84,22);border-left:1px solid rgba(150,150,150,.7);border-top:1px solid rgba(150,150,150,.7)"></div>
<div class="t" style="left:643px;top:533px;width:52px;text-align:center;font-size:22px;color:#111">81</div>
<div class="a" style="left:692px;top:523px;width:51px;height:40px;background:rgb(166,92,30);border-left:1px solid rgba(150,150,150,.7);border-top:1px solid rgba(150,150,150,.7)"></div>
<div class="t" style="left:695px;top:533px;width:51px;text-align:center;font-size:22px;color:#111">84</div>
<div class="a" style="left:743px;top:523px;width:52px;height:40px;background:rgb(170,96,34);border-left:1px solid rgba(150,150,150,.7);border-top:1px solid rgba(150,150,150,.7)"></div>
<div class="t" style="left:746px;top:533px;width:52px;text-align:center;font-size:22px;color:#111">85</div>
<div class="a" style="left:332px;top:563px;width:50px;height:40px;background:#f0f0f0;border-top:1px solid #a8a8a8;border-bottom:1px solid #fff"></div>
<div class="t" style="left:332px;top:575px;width:50px;text-align:center;font-size:16.8px;color:#111">180</div>
<div class="a" style="left:383px;top:563px;width:51px;height:40px;background:rgb(156,84,22);border-left:1px solid rgba(150,150,150,.7);border-top:1px solid rgba(150,150,150,.7)"></div>
<div class="t" style="left:386px;top:572px;width:51px;text-align:center;font-size:22px;color:#111">81</div>
<div class="a" style="left:434px;top:563px;width:52px;height:40px;background:rgb(156,84,22);border-left:1px solid rgba(150,150,150,.7);border-top:1px solid rgba(150,150,150,.7)"></div>
<div class="t" style="left:437px;top:572px;width:52px;text-align:center;font-size:22px;color:#111">81</div>
<div class="a" style="left:486px;top:563px;width:51px;height:40px;background:rgb(156,84,22);border-left:1px solid rgba(150,150,150,.7);border-top:1px solid rgba(150,150,150,.7)"></div>
<div class="t" style="left:489px;top:572px;width:51px;text-align:center;font-size:22px;color:#111">81</div>
<div class="a" style="left:537px;top:563px;width:52px;height:40px;background:rgb(145,76,16);border-left:1px solid rgba(150,150,150,.7);border-top:1px solid rgba(150,150,150,.7)"></div>
<div class="t" style="left:540px;top:572px;width:52px;text-align:center;font-size:22px;color:#111">78</div>
<div class="a" style="left:589px;top:563px;width:51px;height:40px;background:rgb(145,76,16);border-left:1px solid rgba(150,150,150,.7);border-top:1px solid rgba(150,150,150,.7)"></div>
<div class="t" style="left:592px;top:572px;width:51px;text-align:center;font-size:22px;color:#111">78</div>
<div class="a" style="left:640px;top:563px;width:52px;height:40px;background:rgb(152,84,22);border-left:1px solid rgba(150,150,150,.7);border-top:1px solid rgba(150,150,150,.7)"></div>
<div class="t" style="left:643px;top:572px;width:52px;text-align:center;font-size:22px;color:#111">80</div>
<div class="a" style="left:692px;top:563px;width:51px;height:40px;background:rgb(152,84,22);border-left:1px solid rgba(150,150,150,.7);border-top:1px solid rgba(150,150,150,.7)"></div>
<div class="t" style="left:695px;top:572px;width:51px;text-align:center;font-size:22px;color:#111">80</div>
<div class="a" style="left:743px;top:563px;width:52px;height:40px;background:rgb(156,84,22);border-left:1px solid rgba(150,150,150,.7);border-top:1px solid rgba(150,150,150,.7)"></div>
<div class="t" style="left:746px;top:572px;width:52px;text-align:center;font-size:22px;color:#111">81</div>
<div class="a" style="left:332px;top:603px;width:50px;height:40px;background:#f0f0f0;border-top:1px solid #a8a8a8;border-bottom:1px solid #fff"></div>
<div class="t" style="left:332px;top:615px;width:50px;text-align:center;font-size:16.8px;color:#111">160</div>
<div class="a" style="left:383px;top:603px;width:51px;height:40px;background:rgb(128,64,6);border-left:1px solid rgba(150,150,150,.7);border-top:1px solid rgba(150,150,150,.7)"></div>
<div class="t" style="left:386px;top:612px;width:51px;text-align:center;font-size:22px;color:#111">76</div>
<div class="a" style="left:434px;top:603px;width:52px;height:40px;background:rgb(128,64,6);border-left:1px solid rgba(150,150,150,.7);border-top:1px solid rgba(150,150,150,.7)"></div>
<div class="t" style="left:437px;top:612px;width:52px;text-align:center;font-size:22px;color:#111">76</div>
<div class="a" style="left:486px;top:603px;width:51px;height:40px;background:rgb(128,64,6);border-left:1px solid rgba(150,150,150,.7);border-top:1px solid rgba(150,150,150,.7)"></div>
<div class="t" style="left:489px;top:612px;width:51px;text-align:center;font-size:22px;color:#111">76</div>
<div class="a" style="left:537px;top:603px;width:52px;height:40px;background:rgb(135,74,6);border-left:1px solid rgba(150,150,150,.7);border-top:1px solid rgba(150,150,150,.7)"></div>
<div class="t" style="left:540px;top:612px;width:52px;text-align:center;font-size:22px;color:#111">74</div>
<div class="a" style="left:589px;top:603px;width:51px;height:40px;background:rgb(160,110,15);border-left:1px solid rgba(150,150,150,.7);border-top:1px solid rgba(150,150,150,.7)"></div>
<div class="t" style="left:592px;top:612px;width:51px;text-align:center;font-size:22px;color:#111">69</div>
<div class="a" style="left:640px;top:603px;width:52px;height:40px;background:rgb(160,110,15);border-left:1px solid rgba(150,150,150,.7);border-top:1px solid rgba(150,150,150,.7)"></div>
<div class="t" style="left:643px;top:612px;width:52px;text-align:center;font-size:22px;color:#111">69</div>
<div class="a" style="left:692px;top:603px;width:51px;height:40px;background:rgb(135,74,6);border-left:1px solid rgba(150,150,150,.7);border-top:1px solid rgba(150,150,150,.7)"></div>
<div class="t" style="left:695px;top:612px;width:51px;text-align:center;font-size:22px;color:#111">74</div>
<div class="a" style="left:743px;top:603px;width:52px;height:40px;background:rgb(132,70,6);border-left:1px solid rgba(150,150,150,.7);border-top:1px solid rgba(150,150,150,.7)"></div>
<div class="t" style="left:746px;top:612px;width:52px;text-align:center;font-size:22px;color:#111">75</div>
<div class="a" style="left:332px;top:643px;width:50px;height:40px;background:#f0f0f0;border-top:1px solid #a8a8a8;border-bottom:1px solid #fff"></div>
<div class="t" style="left:332px;top:655px;width:50px;text-align:center;font-size:16.8px;color:#111">140</div>
<div class="a" style="left:383px;top:643px;width:51px;height:40px;background:rgb(144,94,10);border-left:1px solid rgba(150,150,150,.7);border-top:1px solid rgba(150,150,150,.7)"></div>
<div class="t" style="left:386px;top:652px;width:51px;text-align:center;font-size:22px;color:#111">70</div>
<div class="a" style="left:434px;top:643px;width:52px;height:40px;background:rgb(144,94,10);border-left:1px solid rgba(150,150,150,.7);border-top:1px solid rgba(150,150,150,.7)"></div>
<div class="t" style="left:437px;top:652px;width:52px;text-align:center;font-size:22px;color:#111">70</div>
<div class="a" style="left:486px;top:643px;width:51px;height:40px;background:rgb(144,94,10);border-left:1px solid rgba(150,150,150,.7);border-top:1px solid rgba(150,150,150,.7)"></div>
<div class="t" style="left:489px;top:652px;width:51px;text-align:center;font-size:22px;color:#111">70</div>
<div class="a" style="left:537px;top:643px;width:52px;height:40px;background:rgb(160,114,16);border-left:1px solid rgba(150,150,150,.7);border-top:1px solid rgba(150,150,150,.7)"></div>
<div class="t" style="left:540px;top:652px;width:52px;text-align:center;font-size:22px;color:#111">67</div>
<div class="a" style="left:589px;top:643px;width:51px;height:40px;background:rgb(174,134,22);border-left:1px solid rgba(150,150,150,.7);border-top:1px solid rgba(150,150,150,.7)"></div>
<div class="t" style="left:592px;top:652px;width:51px;text-align:center;font-size:22px;color:#111">64</div>
<div class="a" style="left:640px;top:643px;width:52px;height:40px;background:rgb(174,134,22);border-left:1px solid rgba(150,150,150,.7);border-top:1px solid rgba(150,150,150,.7)"></div>
<div class="t" style="left:643px;top:652px;width:52px;text-align:center;font-size:22px;color:#111">64</div>
<div class="a" style="left:692px;top:643px;width:51px;height:40px;background:rgb(154,104,14);border-left:1px solid rgba(150,150,150,.7);border-top:1px solid rgba(150,150,150,.7)"></div>
<div class="t" style="left:695px;top:652px;width:51px;text-align:center;font-size:22px;color:#111">68</div>
<div class="a" style="left:743px;top:643px;width:52px;height:40px;background:rgb(160,110,15);border-left:1px solid rgba(150,150,150,.7);border-top:1px solid rgba(150,150,150,.7)"></div>
<div class="t" style="left:746px;top:652px;width:52px;text-align:center;font-size:22px;color:#111">69</div>
<div class="a" style="left:332px;top:683px;width:50px;height:39px;background:#f0f0f0;border-top:1px solid #a8a8a8;border-bottom:1px solid #fff"></div>
<div class="t" style="left:332px;top:695px;width:50px;text-align:center;font-size:16.8px;color:#111">120</div>
<div class="a" style="left:383px;top:683px;width:51px;height:39px;background:rgb(170,128,20);border-left:1px solid rgba(150,150,150,.7);border-top:1px solid rgba(150,150,150,.7)"></div>
<div class="t" style="left:386px;top:692px;width:51px;text-align:center;font-size:22px;color:#111">65</div>
<div class="a" style="left:434px;top:683px;width:52px;height:39px;background:rgb(170,128,20);border-left:1px solid rgba(150,150,150,.7);border-top:1px solid rgba(150,150,150,.7)"></div>
<div class="t" style="left:437px;top:692px;width:52px;text-align:center;font-size:22px;color:#111">65</div>
<div class="a" style="left:486px;top:683px;width:51px;height:39px;background:rgb(174,134,22);border-left:1px solid rgba(150,150,150,.7);border-top:1px solid rgba(150,150,150,.7)"></div>
<div class="t" style="left:489px;top:692px;width:51px;text-align:center;font-size:22px;color:#111">64</div>
<div class="a" style="left:537px;top:683px;width:52px;height:39px;background:rgb(176,138,22);border-left:1px solid rgba(150,150,150,.7);border-top:1px solid rgba(150,150,150,.7)"></div>
<div class="t" style="left:540px;top:692px;width:52px;text-align:center;font-size:22px;color:#111">63</div>
<div class="a" style="left:589px;top:683px;width:51px;height:39px;background:rgb(189,158,28);border-left:1px solid rgba(150,150,150,.7);border-top:1px solid rgba(150,150,150,.7)"></div>
<div class="t" style="left:592px;top:692px;width:51px;text-align:center;font-size:22px;color:#111">60</div>
<div class="a" style="left:640px;top:683px;width:52px;height:39px;background:rgb(186,156,26);border-left:1px solid rgba(150,150,150,.7);border-top:1px solid rgba(150,150,150,.7)"></div>
<div class="t" style="left:643px;top:692px;width:52px;text-align:center;font-size:22px;color:#111">61</div>
<div class="a" style="left:692px;top:683px;width:51px;height:39px;background:rgb(176,138,22);border-left:1px solid rgba(150,150,150,.7);border-top:1px solid rgba(150,150,150,.7)"></div>
<div class="t" style="left:695px;top:692px;width:51px;text-align:center;font-size:22px;color:#111">63</div>
<div class="a" style="left:743px;top:683px;width:52px;height:39px;background:rgb(174,134,22);border-left:1px solid rgba(150,150,150,.7);border-top:1px solid rgba(150,150,150,.7)"></div>
<div class="t" style="left:746px;top:692px;width:52px;text-align:center;font-size:22px;color:#111">64</div>
<div class="a" style="left:383px;top:405px;width:50px;height:38px;border:2px solid #000"></div>
<div class="a" style="left:331px;top:722px;width:466px;height:6px;background:#f0f0f0"></div>
<div class="a" style="left:333px;top:725px;width:54px;height:6px;border:1px solid #8c8c8c;border-radius:3px;background:#f4f4f4"></div>
<div class="a" style="left:390px;top:725px;width:40px;height:6px;border:1px solid #8c8c8c;border-radius:3px;background:#f4f4f4"></div>
<div class="a" style="left:433px;top:725px;width:39px;height:6px;border:1px solid #8c8c8c;border-radius:3px;background:#f4f4f4"></div>
<div class="a" style="left:474px;top:725px;width:48px;height:6px;border:1px solid #8c8c8c;border-radius:3px;background:#f4f4f4"></div>
<div class="a" style="left:606px;top:725px;width:26px;height:6px;border:1px solid #8c8c8c;border-radius:3px;background:#f4f4f4"></div>
<div class="a" style="left:632px;top:725px;width:26px;height:6px;border:1px solid #8c8c8c;border-radius:3px;background:#f4f4f4"></div>
<div class="a" style="left:748px;top:725px;width:48px;height:6px;border:1px solid #8c8c8c;border-radius:3px;background:#f4f4f4"></div>
<div class="a" style="left:863px;top:3px;width:481px;height:730px;background:linear-gradient(180deg,#dbe3ec 0,#cfd9e4 20px,#d2dbe5 100%);border:1px solid #5b6570;border-radius:7px 7px 0 0;box-shadow:inset 0 0 0 1px rgba(255,255,255,.55),3px 3px 13px 1px rgba(0,0,0,.45)"></div><div class="a" style="left:870px;top:32px;width:467px;height:702px;background:#f0f0f0;border:1px solid #7d8791"></div><svg class="a" style="left:872px;top:11px" width="16" height="14" viewBox="0 0 16 14"><defs><linearGradient id="vg" x1="0" y1="0" x2="0" y2="1"><stop offset="0" stop-color="#f06060"/><stop offset="1" stop-color="#a00010"/></linearGradient></defs><path d="M0 0.5 L4.6 0.5 L7.8 9.8 L11.4 2.2 L11 1 L15.2 0.6 L15.5 1.8 L13.6 2.2 L8.2 13.8 L6.6 13.8 Z" fill="url(#vg)"/></svg><div class="t" style="left:892px;top:12px;font-size:12px;color:#111">Boost Control PID Settings</div><div class="a" style="left:1233px;top:3px;width:103px;height:20px;border:1px solid #5a6470;border-top:none;border-radius:0 0 5px 5px;background:linear-gradient(#e4ebf3,#d2dce8);box-shadow:inset 0 0 0 1px rgba(255,255,255,.5)"></div><div class="a" style="left:1261px;top:3px;width:1px;height:20px;background:#9aa5b2"></div><div class="a" style="left:1288px;top:3px;width:1px;height:20px;background:#9aa5b2"></div><div class="a" style="left:1241px;top:13px;width:12px;height:5px;background:#fff;border:1px solid #3c4650;border-radius:1px"></div><div class="a" style="left:1268px;top:8px;width:12px;height:10px;background:#fff;border:1px solid #3c4650;border-radius:1px"></div><div class="a" style="left:1271px;top:11px;width:6px;height:4px;border:1px solid #3c4650"></div><svg class="a" style="left:1304px;top:7px" width="16" height="12" viewBox="0 0 16 12"><path d="M2 1 L6 1 L8 3.5 L10 1 L14 1 L10 6 L14 11 L10 11 L8 8.5 L6 11 L2 11 L6 6 Z" fill="#fff" stroke="#3c4650" stroke-width="1"/></svg>
<div class="t" style="left:874px;top:38px;font-size:11.8px;font-weight:700;color:#111">Output Channel</div>
<div class="t" style="left:895px;top:57px;font-size:10.6px;color:#1a1a1a">Boost PID channel</div>
<div class="a" style="left:1211px;top:55px;width:75px;height:21px;border:1px solid #707070;border-radius:3px;background:linear-gradient(#f2f2f2 0,#ebebeb 48%,#dddddd 52%,#d2d2d2 100%)"></div>
<div class="t" style="left:1214px;top:61px;font-size:11px;color:#111">INJGroup</div>
<svg class="a" style="left:1274px;top:63px" width="8" height="5"><path d="M0 0 L8 0 L4 5 Z" fill="#111"/></svg>
<div class="t" style="left:895px;top:84px;font-size:10.6px;color:#1a1a1a">Channel</div>
<div class="a" style="left:1207px;top:82px;width:79px;height:21px;border:1px solid #707070;border-radius:3px;background:linear-gradient(#f2f2f2 0,#ebebeb 48%,#dddddd 52%,#d2d2d2 100%)"></div>
<div class="t" style="left:1210px;top:88px;font-size:11px;color:#111">7</div>
<svg class="a" style="left:1274px;top:90px" width="8" height="5"><path d="M0 0 L8 0 L4 5 Z" fill="#111"/></svg>
<div class="t" style="left:874px;top:111px;font-size:11.8px;font-weight:700;color:#111">Settings</div>
<div class="t" style="left:895px;top:130px;font-size:10.6px;color:#1a1a1a">PWM Period</div>
<div class="a" style="left:1189px;top:128px;width:97px;height:21px;border:1px solid #707070;border-radius:3px;background:linear-gradient(#f2f2f2 0,#ebebeb 48%,#dddddd 52%,#d2d2d2 100%)"></div>
<div class="t" style="left:1192px;top:134px;font-size:11px;color:#111">31Hz</div>
<svg class="a" style="left:1274px;top:136px" width="8" height="5"><path d="M0 0 L8 0 L4 5 Z" fill="#111"/></svg>
<div class="t" style="left:895px;top:157px;font-size:10.6px;color:#1a1a1a">Reducing boost refDC when over MAT / EGT Limits</div>
<div class="a" style="left:1216px;top:155px;width:70px;height:21px;border:1px solid #707070;border-radius:3px;background:linear-gradient(#f2f2f2 0,#ebebeb 48%,#dddddd 52%,#d2d2d2 100%)"></div>
<div class="t" style="left:1219px;top:161px;font-size:11px;color:#111">Disabled</div>
<svg class="a" style="left:1274px;top:163px" width="8" height="5"><path d="M0 0 L8 0 L4 5 Z" fill="#111"/></svg>
<div class="t" style="left:895px;top:184px;font-size:10.6px;color:#1a1a1a">Speed dependent</div>
<div class="a" style="left:1216px;top:182px;width:70px;height:21px;border:1px solid #c6c6c6;border-radius:3px;background:#f4f4f4"></div>
<div class="t" style="left:1219px;top:188px;font-size:11px;color:#8d8d8d">Disabled</div>
<svg class="a" style="left:1274px;top:190px" width="8" height="5"><path d="M0 0 L8 0 L4 5 Z" fill="#a0a0a0"/></svg>
<div class="t" style="left:895px;top:211px;font-size:10.6px;color:#1a1a1a">Gear dependent</div>
<div class="a" style="left:1220px;top:209px;width:66px;height:21px;border:1px solid #c6c6c6;border-radius:3px;background:#f4f4f4"></div>
<div class="t" style="left:1223px;top:215px;font-size:11px;color:#8d8d8d">1 gear</div>
<svg class="a" style="left:1274px;top:217px" width="8" height="5"><path d="M0 0 L8 0 L4 5 Z" fill="#a0a0a0"/></svg>
<div class="t" style="left:895px;top:238px;font-size:10.6px;color:#1a1a1a">Gear or Speed dependent</div>
<div class="a" style="left:1187px;top:236px;width:99px;height:21px;border:1px solid #707070;border-radius:3px;background:linear-gradient(#f2f2f2 0,#ebebeb 48%,#dddddd 52%,#d2d2d2 100%)"></div>
<div class="t" style="left:1190px;top:242px;font-size:11px;color:#111">No Dependent</div>
<svg class="a" style="left:1274px;top:244px" width="8" height="5"><path d="M0 0 L8 0 L4 5 Z" fill="#111"/></svg>
<div class="t" style="left:895px;top:265px;font-size:10.6px;color:#1a1a1a">Boost Valve OFF Below This Pressure</div>
<div class="a" style="left:1226px;top:263px;width:60px;height:21px;background:#fff;border:1px solid #e0e0e0;border-radius:2px"></div>
<div class="t" style="left:1233px;top:268px;font-size:11px;color:#111">102</div>
<div class="t" style="left:1292px;top:268px;font-size:11px;color:#111">kPa</div>
<div class="t" style="left:874px;top:292px;font-size:11.8px;font-weight:700;color:#111">PID settings</div>
<div class="t" style="left:895px;top:311px;font-size:10.6px;color:#1a1a1a">Apply max DC until</div>
<div class="a" style="left:1216px;top:309px;width:70px;height:21px;border:1px solid #707070;border-radius:3px;background:linear-gradient(#f2f2f2 0,#ebebeb 48%,#dddddd 52%,#d2d2d2 100%)"></div>
<div class="t" style="left:1219px;top:315px;font-size:11px;color:#111">-30 kpa</div>
<svg class="a" style="left:1274px;top:317px" width="8" height="5"><path d="M0 0 L8 0 L4 5 Z" fill="#111"/></svg>
<div class="t" style="left:895px;top:338px;font-size:10.6px;color:#1a1a1a">PD control (far from target)</div>
<div class="a" style="left:1220px;top:336px;width:66px;height:21px;border:1px solid #707070;border-radius:3px;background:linear-gradient(#f2f2f2 0,#ebebeb 48%,#dddddd 52%,#d2d2d2 100%)"></div>
<div class="t" style="left:1223px;top:342px;font-size:11px;color:#111">-20 kpa</div>
<svg class="a" style="left:1274px;top:344px" width="8" height="5"><path d="M0 0 L8 0 L4 5 Z" fill="#111"/></svg>
<div class="t" style="left:895px;top:365px;font-size:10.6px;color:#1a1a1a">PI control (close to target)</div>
<div class="a" style="left:1220px;top:363px;width:66px;height:21px;border:1px solid #707070;border-radius:3px;background:linear-gradient(#f2f2f2 0,#ebebeb 48%,#dddddd 52%,#d2d2d2 100%)"></div>
<div class="t" style="left:1223px;top:369px;font-size:11px;color:#111">-16 kpa</div>
<svg class="a" style="left:1274px;top:371px" width="8" height="5"><path d="M0 0 L8 0 L4 5 Z" fill="#111"/></svg>
<div class="t" style="left:895px;top:392px;font-size:10.6px;color:#1a1a1a">PID overlap range</div>
<div class="a" style="left:1220px;top:390px;width:66px;height:21px;border:1px solid #707070;border-radius:3px;background:linear-gradient(#f2f2f2 0,#ebebeb 48%,#dddddd 52%,#d2d2d2 100%)"></div>
<div class="t" style="left:1223px;top:396px;font-size:11px;color:#111">6 kpa</div>
<svg class="a" style="left:1274px;top:398px" width="8" height="5"><path d="M0 0 L8 0 L4 5 Z" fill="#111"/></svg>
<div class="t" style="left:895px;top:419px;font-size:10.6px;color:#1a1a1a">Boost P</div>
<div class="a" style="left:1226px;top:417px;width:60px;height:21px;background:#fff;border:1px solid #e0e0e0;border-radius:2px"></div>
<div class="t" style="left:1233px;top:422px;font-size:11px;color:#111">50</div>
<div class="t" style="left:895px;top:446px;font-size:10.6px;color:#1a1a1a">Boost I</div>
<div class="a" style="left:1226px;top:444px;width:60px;height:21px;background:#fff;border:1px solid #e0e0e0;border-radius:2px"></div>
<div class="t" style="left:1233px;top:449px;font-size:11px;color:#111">30</div>
<div class="t" style="left:895px;top:473px;font-size:10.6px;color:#1a1a1a">Boost D</div>
<div class="a" style="left:1226px;top:471px;width:60px;height:21px;background:#fff;border:1px solid #e0e0e0;border-radius:2px"></div>
<div class="t" style="left:1233px;top:476px;font-size:11px;color:#111">0</div>
<div class="t" style="left:895px;top:500px;font-size:10.6px;color:#1a1a1a">Boostcontrol PID integral limit</div>
<div class="a" style="left:1226px;top:498px;width:60px;height:21px;background:#fff;border:1px solid #e0e0e0;border-radius:2px"></div>
<div class="t" style="left:1233px;top:503px;font-size:11px;color:#111">0</div>
<div class="t" style="left:895px;top:527px;font-size:10.6px;color:#1a1a1a">Boost target</div>
<div class="a" style="left:1196px;top:525px;width:90px;height:21px;border:1px solid #707070;border-radius:3px;background:linear-gradient(#f2f2f2 0,#ebebeb 48%,#dddddd 52%,#d2d2d2 100%)"></div>
<div class="t" style="left:1199px;top:531px;font-size:11px;color:#111">MAP target</div>
<svg class="a" style="left:1274px;top:533px" width="8" height="5"><path d="M0 0 L8 0 L4 5 Z" fill="#111"/></svg>
<div class="t" style="left:895px;top:554px;font-size:10.6px;color:#1a1a1a">Reference lookup</div>
<div class="a" style="left:1144px;top:552px;width:142px;height:21px;border:1px solid #707070;border-radius:3px;background:linear-gradient(#f2f2f2 0,#ebebeb 48%,#dddddd 52%,#d2d2d2 100%)"></div>
<div class="t" style="left:1147px;top:558px;font-size:11px;color:#111">Boost Target based</div>
<svg class="a" style="left:1274px;top:560px" width="8" height="5"><path d="M0 0 L8 0 L4 5 Z" fill="#111"/></svg>
<div class="t" style="left:895px;top:581px;font-size:10.6px;color:#1a1a1a">Boost pwm maximum value</div>
<div class="a" style="left:1226px;top:579px;width:60px;height:21px;background:#fff;border:1px solid #e0e0e0;border-radius:2px"></div>
<div class="t" style="left:1233px;top:584px;font-size:11px;color:#111">100</div>
<div class="t" style="left:895px;top:608px;font-size:10.6px;color:#1a1a1a">Boost pwm minimum value</div>
<div class="a" style="left:1226px;top:606px;width:60px;height:21px;background:#fff;border:1px solid #e0e0e0;border-radius:2px"></div>
<div class="t" style="left:1233px;top:611px;font-size:11px;color:#111">0</div>
<div class="t" style="left:874px;top:635px;font-size:11.8px;font-weight:700;color:#111">External boost input settings</div>
<div class="t" style="left:874px;top:654px;font-size:11.8px;font-weight:700;color:#111">Warning, sensor configuration shared to barometric correction</div>
<div class="t" style="left:895px;top:673px;font-size:10.6px;color:#1a1a1a">Sensor input</div>
<div class="a" style="left:1188px;top:672px;width:98px;height:21px;border:1px solid #c6c6c6;border-radius:3px;background:#f4f4f4"></div>
<div class="t" style="left:1191px;top:678px;font-size:11px;color:#8d8d8d">MCP3208 CH7</div>
<svg class="a" style="left:1274px;top:680px" width="8" height="5"><path d="M0 0 L8 0 L4 5 Z" fill="#a0a0a0"/></svg>
<div class="t" style="left:895px;top:700px;font-size:10.6px;color:#1a1a1a">Sensor calibration factor</div>
<div class="a" style="left:1226px;top:698px;width:60px;height:21px;background:#f0f0f0;border:1px solid #c8c8c8;border-radius:2px"></div>
<div class="t" style="left:1233px;top:703px;font-size:11px;color:#8d8d8d">414</div>
<div class="a" style="left:1226px;top:725px;width:60px;height:21px;background:#f0f0f0;border:1px solid #c8c8c8;border-radius:2px"></div>
<div class="t" style="left:1233px;top:730px;font-size:11px;color:#8d8d8d"></div>
<div class="t" style="left:895px;top:727px;font-size:10.6px;color:#1a1a1a">Sensor calibration offset</div>
<div class="a" style="left:0;top:728px;width:1366px;height:40px;background:linear-gradient(90deg,#8fa7c0 0,#a3bdd7 60px,#b3d0eb 150px,#b3d1ec 1050px,#8ea7c0 1100px,#7d95ae 1130px,#7d95ae 100%);border-top:1px solid #46586a"></div>
<div class="a" style="left:0;top:729px;width:1366px;height:1px;background:rgba(255,255,255,.35)"></div>
<svg class="a" style="left:7px;top:729px" width="40" height="39" viewBox="0 0 40 39">
<defs>
<linearGradient id="orbg" x1="0" y1="0" x2="0" y2="1"><stop offset="0" stop-color="#d0dde8"/><stop offset="0.45" stop-color="#7f9fbc"/><stop offset="0.5" stop-color="#0f4a8a"/><stop offset="0.8" stop-color="#1a78c0"/><stop offset="1" stop-color="#28d0f8"/></linearGradient>
</defs>
<circle cx="20" cy="19.5" r="18" fill="url(#orbg)" stroke="#123a62" stroke-width="1.3"/>
<circle cx="20" cy="19.5" r="19" fill="none" stroke="#c8dcec" stroke-width="0.8" opacity="0.7"/>
<path d="M11.5 9.5 Q16 7.5 21 9.5 L20 18 Q15.5 16 10.5 17.5 Z" fill="#f25a1c"/>
<path d="M21.5 10 Q26.5 12 32 10.5 L30.5 19.5 Q25.5 21 20.5 19 Z" fill="#8cc43a"/>
<path d="M10 18.5 Q15 17 20 19 L18.5 28 Q14 26 9 27.5 Z" fill="#2aa2e8"/>
<path d="M20.5 20 Q25.5 22 30.5 20.5 L29 30 Q24 31.5 19 29 Z" fill="#fcb82a"/>
</svg>
<svg class="a" style="left:58px;top:733px" width="9" height="32"><rect x="0" y="0" width="2" height="2" fill="#1e2a36"/><rect x="0" y="0" width="1" height="1" fill="#c8d4e0"/><rect x="0" y="4" width="2" height="2" fill="#1e2a36"/><rect x="0" y="4" width="1" height="1" fill="#c8d4e0"/><rect x="0" y="8" width="2" height="2" fill="#1e2a36"/><rect x="0" y="8" width="1" height="1" fill="#c8d4e0"/><rect x="0" y="12" width="2" height="2" fill="#1e2a36"/><rect x="0" y="12" width="1" height="1" fill="#c8d4e0"/><rect x="0" y="16" width="2" height="2" fill="#1e2a36"/><rect x="0" y="16" width="1" height="1" fill="#c8d4e0"/><rect x="0" y="20" width="2" height="2" fill="#1e2a36"/><rect x="0" y="20" width="1" height="1" fill="#c8d4e0"/><rect x="0" y="24" width="2" height="2" fill="#1e2a36"/><rect x="0" y="24" width="1" height="1" fill="#c8d4e0"/><rect x="0" y="28" width="2" height="2" fill="#1e2a36"/><rect x="0" y="28" width="1" height="1" fill="#c8d4e0"/><rect x="3" y="0" width="2" height="2" fill="#1e2a36"/><rect x="3" y="0" width="1" height="1" fill="#c8d4e0"/><rect x="3" y="4" width="2" height="2" fill="#1e2a36"/><rect x="3" y="4" width="1" height="1" fill="#c8d4e0"/><rect x="3" y="8" width="2" height="2" fill="#1e2a36"/><rect x="3" y="8" width="1" height="1" fill="#c8d4e0"/><rect x="3" y="12" width="2" height="2" fill="#1e2a36"/><rect x="3" y="12" width="1" height="1" fill="#c8d4e0"/><rect x="3" y="16" width="2" height="2" fill="#1e2a36"/><rect x="3" y="16" width="1" height="1" fill="#c8d4e0"/><rect x="3" y="20" width="2" height="2" fill="#1e2a36"/><rect x="3" y="20" width="1" height="1" fill="#c8d4e0"/><rect x="3" y="24" width="2" height="2" fill="#1e2a36"/><rect x="3" y="24" width="1" height="1" fill="#c8d4e0"/><rect x="3" y="28" width="2" height="2" fill="#1e2a36"/><rect x="3" y="28" width="1" height="1" fill="#c8d4e0"/><rect x="6" y="0" width="2" height="2" fill="#1e2a36"/><rect x="6" y="0" width="1" height="1" fill="#c8d4e0"/><rect x="6" y="4" width="2" height="2" fill="#1e2a36"/><rect x="6" y="4" width="1" height="1" fill="#c8d4e0"/><rect x="6" y="8" width="2" height="2" fill="#1e2a36"/><rect x="6" y="8" width="1" height="1" fill="#c8d4e0"/><rect x="6" y="12" width="2" height="2" fill="#1e2a36"/><rect x="6" y="12" width="1" height="1" fill="#c8d4e0"/><rect x="6" y="16" width="2" height="2" fill="#1e2a36"/><rect x="6" y="16" width="1" height="1" fill="#c8d4e0"/><rect x="6" y="20" width="2" height="2" fill="#1e2a36"/><rect x="6" y="20" width="1" height="1" fill="#c8d4e0"/><rect x="6" y="24" width="2" height="2" fill="#1e2a36"/><rect x="6" y="24" width="1" height="1" fill="#c8d4e0"/><rect x="6" y="28" width="2" height="2" fill="#1e2a36"/><rect x="6" y="28" width="1" height="1" fill="#c8d4e0"/></svg>
<svg class="a" style="left:88px;top:733px" width="34" height="32" viewBox="0 0 34 32">
<path d="M2 6 L12 6 L14 4 L28 4 L28 8 L2 8 Z" fill="#d9b25a"/>
<rect x="2" y="8" width="30" height="22" rx="1" fill="#f0d27a" stroke="#b48a2a"/>
<rect x="4" y="5" width="3" height="2" fill="#3a8a3a"/><rect x="11" y="5" width="3" height="2" fill="#c03030"/><rect x="18" y="5" width="3" height="2" fill="#3070c0"/>
<path d="M6 30 L6 19 L28 19 L28 30 L24 30 L24 23 L10 23 L10 30 Z" fill="#7fb8e8" stroke="#3f7ab8"/>
</svg>
<svg class="a" style="left:149px;top:735px" width="34" height="30" viewBox="0 0 34 30">
<rect x="6" y="3" width="22" height="24" fill="#9cc9ea" stroke="#5e96c4"/>
<rect x="3" y="4" width="22" height="24" fill="#cde4f6" stroke="#5e96c4"/>
<circle cx="14" cy="16" r="9" fill="#f08a18" stroke="#c86a08"/>
<path d="M11 11 L19 16 L11 21 Z" fill="#fff"/>
</svg>
<div class="a" style="left:200px;top:729px;width:59px;height:39px;border:1px solid #3a4e62;border-radius:3px;background:linear-gradient(135deg,rgba(255,255,255,.55),rgba(255,255,255,.12) 60%);box-shadow:inset 0 0 0 1px rgba(255,255,255,.5)"></div>
<svg class="a" style="left:212px;top:731px" width="34" height="34" viewBox="0 0 34 34">
<defs><linearGradient id="ffo" x1="0.85" y1="0.05" x2="0.15" y2="0.95"><stop offset="0" stop-color="#ffe23a"/><stop offset="0.45" stop-color="#ff9a1e"/><stop offset="1" stop-color="#e8204e"/></linearGradient>
<radialGradient id="ffb" cx="0.4" cy="0.35" r="0.7"><stop offset="0" stop-color="#20a8f0"/><stop offset="0.6" stop-color="#2060d8"/><stop offset="1" stop-color="#4a2098"/></radialGradient></defs>
<circle cx="17" cy="17" r="15" fill="url(#ffo)"/>
<circle cx="18" cy="14" r="9.5" fill="url(#ffb)"/>
<path d="M4 9 L6 5 Q10 4 13 7 Q10 10 12 13 Q10 16 12 19 Q15 22 20 21 Q25 19 27 14 Q28 23 21 27 Q12 30 6 23 Q2 16 4 9 Z" fill="#ff6a26"/>
<path d="M19 2 Q27 4 30 12 Q31 20 26 26 Q28 18 25 12 Q23 7 19 2 Z" fill="#ffd23a"/>
</svg>
<svg class="a" style="left:275px;top:732px" width="33" height="33" viewBox="0 0 33 33">
<rect x="0" y="0" width="33" height="33" fill="#fff"/>
<rect x="8.5" y="1.5" width="23" height="30" rx="3" fill="#fff" stroke="#d8c8c8" stroke-width="1"/>
<text x="29" y="30" transform="rotate(-90 29 30)" textLength="27" lengthAdjust="spacingAndGlyphs" font-family="Liberation Sans" font-weight="700" font-size="15" fill="#c80c0c">DAQ</text>
<circle cx="8.5" cy="8" r="3" fill="#707070"/><rect x="6.5" y="12" width="4" height="17" rx="2" fill="#707070"/>
<path d="M3 20 Q4 14 10 13 Q9 19 3 20 Z" fill="#8ad06a"/>
</svg>
<div class="a" style="left:372px;top:729px;width:11px;height:39px;border:1px solid #46586a;border-left:none;border-radius:0 3px 3px 0;background:linear-gradient(90deg,#d8e6f2,#c0d4e8)"></div>
<div class="a" style="left:372px;top:729px;width:6px;height:39px;border-right:1px solid #46586a;background:#e6eef6"></div>
<div class="a" style="left:323px;top:729px;width:52px;height:39px;border:1px solid #2e3e4e;border-radius:3px;background:linear-gradient(160deg,#f4f8fc,#dbe6f0 60%,#cfdeec);box-shadow:inset 0 0 0 1px rgba(255,255,255,.7)"></div>
<svg class="a" style="left:334px;top:734px" width="31" height="29" viewBox="0 0 16 14" preserveAspectRatio="none"><defs><linearGradient id="vg2" x1="0" y1="0" x2="0" y2="1"><stop offset="0" stop-color="#e87070"/><stop offset="0.5" stop-color="#d81010"/><stop offset="1" stop-color="#c00000"/></linearGradient></defs><path d="M0 0.5 L4.8 0.5 L8.2 9.8 L11.6 2.6 L11 0.5 L15.8 0.5 L15.6 2.6 L13.6 2.6 L8.6 14 L7.4 14 Z" fill="url(#vg2)"/></svg>
<svg class="a" style="left:1108px;top:733px" width="9" height="32"><rect x="0" y="0" width="2" height="2" fill="#1e2a36"/><rect x="0" y="0" width="1" height="1" fill="#c8d4e0"/><rect x="0" y="4" width="2" height="2" fill="#1e2a36"/><rect x="0" y="4" width="1" height="1" fill="#c8d4e0"/><rect x="0" y="8" width="2" height="2" fill="#1e2a36"/><rect x="0" y="8" width="1" height="1" fill="#c8d4e0"/><rect x="0" y="12" width="2" height="2" fill="#1e2a36"/><rect x="0" y="12" width="1" height="1" fill="#c8d4e0"/><rect x="0" y="16" width="2" height="2" fill="#1e2a36"/><rect x="0" y="16" width="1" height="1" fill="#c8d4e0"/><rect x="0" y="20" width="2" height="2" fill="#1e2a36"/><rect x="0" y="20" width="1" height="1" fill="#c8d4e0"/><rect x="0" y="24" width="2" height="2" fill="#1e2a36"/><rect x="0" y="24" width="1" height="1" fill="#c8d4e0"/><rect x="0" y="28" width="2" height="2" fill="#1e2a36"/><rect x="0" y="28" width="1" height="1" fill="#c8d4e0"/><rect x="3" y="0" width="2" height="2" fill="#1e2a36"/><rect x="3" y="0" width="1" height="1" fill="#c8d4e0"/><rect x="3" y="4" width="2" height="2" fill="#1e2a36"/><rect x="3" y="4" width="1" height="1" fill="#c8d4e0"/><rect x="3" y="8" width="2" height="2" fill="#1e2a36"/><rect x="3" y="8" width="1" height="1" fill="#c8d4e0"/><rect x="3" y="12" width="2" height="2" fill="#1e2a36"/><rect x="3" y="12" width="1" height="1" fill="#c8d4e0"/><rect x="3" y="16" width="2" height="2" fill="#1e2a36"/><rect x="3" y="16" width="1" height="1" fill="#c8d4e0"/><rect x="3" y="20" width="2" height="2" fill="#1e2a36"/><rect x="3" y="20" width="1" height="1" fill="#c8d4e0"/><rect x="3" y="24" width="2" height="2" fill="#1e2a36"/><rect x="3" y="24" width="1" height="1" fill="#c8d4e0"/><rect x="3" y="28" width="2" height="2" fill="#1e2a36"/><rect x="3" y="28" width="1" height="1" fill="#c8d4e0"/><rect x="6" y="0" width="2" height="2" fill="#1e2a36"/><rect x="6" y="0" width="1" height="1" fill="#c8d4e0"/><rect x="6" y="4" width="2" height="2" fill="#1e2a36"/><rect x="6" y="4" width="1" height="1" fill="#c8d4e0"/><rect x="6" y="8" width="2" height="2" fill="#1e2a36"/><rect x="6" y="8" width="1" height="1" fill="#c8d4e0"/><rect x="6" y="12" width="2" height="2" fill="#1e2a36"/><rect x="6" y="12" width="1" height="1" fill="#c8d4e0"/><rect x="6" y="16" width="2" height="2" fill="#1e2a36"/><rect x="6" y="16" width="1" height="1" fill="#c8d4e0"/><rect x="6" y="20" width="2" height="2" fill="#1e2a36"/><rect x="6" y="20" width="1" height="1" fill="#c8d4e0"/><rect x="6" y="24" width="2" height="2" fill="#1e2a36"/><rect x="6" y="24" width="1" height="1" fill="#c8d4e0"/><rect x="6" y="28" width="2" height="2" fill="#1e2a36"/><rect x="6" y="28" width="1" height="1" fill="#c8d4e0"/></svg>
<div class="t" style="left:1125px;top:740px;font-size:12px;color:#f2f6fa">EN</div>
<svg class="a" style="left:1156px;top:746px" width="10" height="6"><path d="M0.5 5.5 L5 1 L9.5 5.5 Z" fill="#fff" stroke="#3a4a5a" stroke-width="0.6"/></svg>
<svg class="a" style="left:1176px;top:740px" width="18" height="17" viewBox="0 0 18 17"><path d="M1 5.5 L5 5.5 L9.5 1.5 L9.5 15.5 L5 11.5 L1 11.5 Z" fill="#fff" stroke="#2a3644"/><path d="M11.5 5.5 Q13.5 8.5 11.5 11.5 M13.5 3.5 Q17 8.5 13.5 13.5" stroke="#fff" stroke-width="1.6" fill="none"/><path d="M11.5 5.5 Q13.5 8.5 11.5 11.5 M13.5 3.5 Q17 8.5 13.5 13.5" stroke="#2a3644" stroke-width="0.5" fill="none"/></svg>
<svg class="a" style="left:1200px;top:740px" width="18" height="18" viewBox="0 0 18 18"><path d="M2.5 1 L2.5 17" stroke="#fff" stroke-width="2.2"/><path d="M2.5 1 L2.5 17" stroke="#2a3644" stroke-width="0.6"/><path d="M3 2 Q9 0 16 4 L14 7 Q9 9 3 9 Z" fill="#fff" stroke="#2a3644" stroke-width="0.8"/></svg>
<svg class="a" style="left:1224px;top:740px" width="17" height="19" viewBox="0 0 17 19"><rect x="1" y="4" width="10" height="13" rx="1" fill="#fff" stroke="#2a3644"/><rect x="6" y="7" width="9" height="7" rx="1" fill="#fff" stroke="#2a3644"/><path d="M8 2 L8 7 M13 2 L13 7 M10 14 L10 18" stroke="#2a3644" stroke-width="1.2"/></svg>
<svg class="a" style="left:1249px;top:743px" width="17" height="13" viewBox="0 0 17 13"><rect x="0.5" y="9" width="3" height="3.5" fill="#fff" stroke="#2a3644" stroke-width="0.6"/><rect x="4.5" y="7" width="3" height="5.5" fill="#fff" stroke="#2a3644" stroke-width="0.6"/><rect x="8.5" y="4" width="3" height="8.5" fill="#fff" stroke="#2a3644" stroke-width="0.6"/><rect x="12.5" y="1" width="3" height="11.5" fill="#fff" stroke="#2a3644" stroke-width="0.6"/></svg>
<div class="t" style="left:1278px;top:734px;width:68px;text-align:center;font-size:12px;color:#f4f8fc">10:15 PM</div>
<div class="t" style="left:1278px;top:751px;width:66px;text-align:center;font-size:12px;color:#f4f8fc">13-Nov-18</div>
<div class="a" style="left:1351px;top:729px;width:15px;height:39px;background:linear-gradient(90deg,#8aa2ba,#b4c8dc);border-left:1px solid #4a5e72"></div>
</body></html>
